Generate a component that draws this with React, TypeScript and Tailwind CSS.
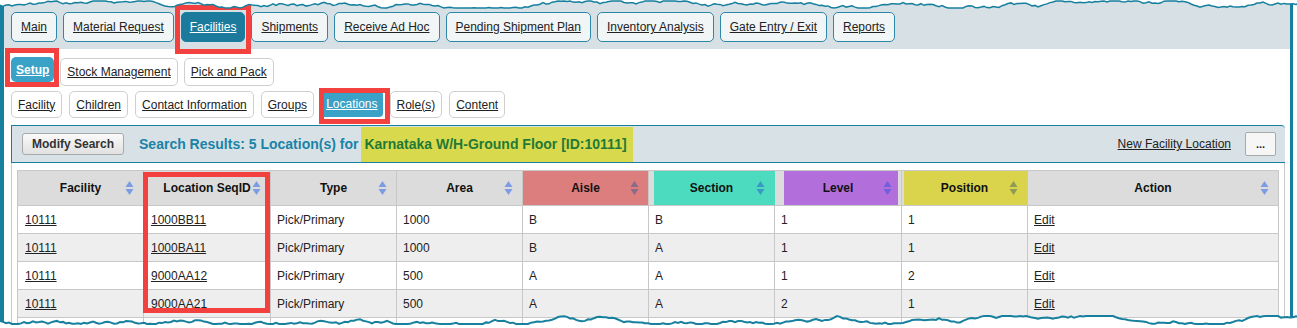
import React from 'react';

const mainTabs = ['Main', 'Material Request', 'Facilities', 'Shipments', 'Receive Ad Hoc', 'Pending Shipment Plan', 'Inventory Analysis', 'Gate Entry / Exit', 'Reports'];
const subTabs = ['Setup', 'Stock Management', 'Pick and Pack'];
const setupTabs = ['Facility', 'Children', 'Contact Information', 'Groups', 'Locations', 'Role(s)', 'Content'];

const rows = [
  { seq: '1000BB11', type: 'Pick/Primary', area: '1000', aisle: 'B', section: 'B', level: '1', position: '1' },
  { seq: '1000BA11', type: 'Pick/Primary', area: '1000', aisle: 'B', section: 'A', level: '1', position: '1' },
  { seq: '9000AA12', type: 'Pick/Primary', area: '500', aisle: 'A', section: 'A', level: '1', position: '2' },
  { seq: '9000AA21', type: 'Pick/Primary', area: '500', aisle: 'A', section: 'A', level: '2', position: '1' },
];

// torn paper edge, random walk
function jagged(seed: number, base: number, min: number, max: number) {
  let s = seed;
  let y = base;
  const pts: [number, number][] = [];
  for (let x = 0; x <= 1300; x += 3) {
    s = (s * 9301 + 49297) % 233280;
    const r = s / 233280;
    y += (r - 0.5) * 3;
    if (r > 0.96) y -= 3;
    if (r < 0.04) y += 3;
    y = Math.max(min, Math.min(max, y));
    pts.push([x, Math.round(y * 10) / 10]);
  }
  return pts;
}

function TornEdges() {
  const top = jagged(17, 4, 1, 8);
  const bottom = jagged(91, 320, 316, 324);
  const line = (p: [number, number][]) => p.map(([x, y]) => `${x},${y}`).join(' ');
  return (
    <svg className="pointer-events-none absolute inset-0" width={1297} height={328}>
      <polygon points={`0,0 ${line(top)} 1300,0`} fill="#fff" />
      <polyline points={line(top)} fill="none" stroke="#17809f" strokeWidth={1.5} />
      <polygon points={`0,328 ${line(bottom)} 1300,328`} fill="#fff" />
      <polyline points={line(bottom)} fill="none" stroke="#17809f" strokeWidth={2} />
    </svg>
  );
}

function RedBox({ className }: { className: string }) {
  return <span className={`pointer-events-none absolute border-[5px] border-[#f2413f] ${className}`} />;
}

function SortIcon({ color = '#7d9ce2' }: { color?: string }) {
  return (
    <svg width="9" height="15" viewBox="0 0 9 15" className="absolute right-[9px] top-1/2 -translate-y-1/2">
      <path d="M4.5 0.5 L8.5 6.5 H0.5 Z" fill={color} />
      <path d="M4.5 14.5 L8.5 8.5 H0.5 Z" fill={color} />
    </svg>
  );
}

function Header({ label, bg, inner, icon }: { label: string; bg?: string; inner?: string; icon?: string }) {
  return (
    <th className="relative h-[35px] border border-[#c8c8c8] bg-[#dcdcdc] p-0 text-[12px] font-bold text-[#111]">
      {bg ? <div className={`absolute inset-y-0 ${inner} ${bg}`} /> : null}
      <span className="relative">{label}</span>
      <SortIcon color={icon} />
    </th>
  );
}

export default function App() {
  return (
    <div className="relative h-[328px] w-[1297px] overflow-hidden bg-white font-['Liberation_Sans',Arial,sans-serif] text-[#222]">
      <div className="mr-[4px] h-full border-l-4 border-r-[3px] border-[#17809f]">
        {/* top navigation */}
        <nav className="flex h-[49px] gap-[6px] bg-[#d6e0e5] pl-[7px] pt-[12px]">
          {mainTabs.map((t) =>
            t === 'Facilities' ? (
              <div key={t} className="relative ml-px">
                <a className="flex h-[30px] items-center rounded-[5px] border border-[#17809f] bg-[#1c7b9d] px-[8px] text-[12px] text-white underline">
                  {t}
                </a>
                <RedBox className="-bottom-[5px] -left-[6px] -right-[6px] -top-[7px]" />
              </div>
            ) : (
              <a key={t} className="flex h-[30px] items-center rounded-[5px] border border-[#2d87a8] bg-[#f1f5f6] px-[9px] text-[12px] underline">
                {t}
              </a>
            )
          )}
        </nav>

        {/* facility sub tabs */}
        <div className="flex h-[37px] items-start gap-[6px] pl-[7px] pt-[8px]">
          {subTabs.map((t) =>
            t === 'Setup' ? (
              <div key={t} className="relative">
                <a className="flex h-[25px] items-center rounded-[5px] bg-[#3aa1c7] px-[5px] text-[12px] font-bold text-white underline">
                  {t}
                </a>
                <RedBox className="-bottom-[5px] -left-[6px] -right-[5px] -top-[9px]" />
              </div>
            ) : (
              <a key={t} className="mt-px flex h-[28px] items-center rounded-[5px] border border-[#cfcfcf] bg-white px-[6px] text-[12px] underline">
                {t}
              </a>
            )
          )}
        </div>

        {/* setup tabs */}
        <div className="flex h-[32px] items-start gap-[7px] pl-[7px] pt-[5px]">
          {setupTabs.map((t) =>
            t === 'Locations' ? (
              <div key={t} className="relative">
                <a className="flex h-[26px] items-center rounded-[4px] bg-[#3aa1c7] px-[5px] text-[12px] text-white underline">
                  {t}
                </a>
                <RedBox className="-bottom-[7px] -left-[2px] -right-[7px] -top-[3px]" />
              </div>
            ) : (
              <a key={t} className="flex h-[27px] items-center rounded-[5px] border border-[#cfcfcf] bg-white px-[6px] text-[12px] underline">
                {t}
              </a>
            )
          )}
        </div>

        {/* search results panel */}
        <div className="ml-[7px] mr-[5px] mt-[7px] flex h-[38px] items-center rounded-tr-[4px] border-y border-l border-[#17809f] bg-[#d7e1e6] pl-[10px] pr-[9px]">
          <button className="h-[22px] rounded-[3px] border border-[#a9a9a9] bg-gradient-to-b from-[#fafafa] to-[#e1e1e1] px-[9px] text-[12px] font-bold text-[#333]">
            Modify Search
          </button>
          <span className="ml-[15px] text-[14px] font-bold text-[#1a83a6]">Search Results: 5 Location(s) for</span>
          <span className="ml-[3px] flex h-[35px] items-center self-end bg-[#d9d94d] pl-[3px] pr-[6px] text-[14px] font-bold text-[#1f7a36]">
            Karnataka W/H-Ground Floor [ID:10111]
          </span>
          <a className="ml-auto text-[12px] underline">New Facility Location</a>
          <button className="ml-[14px] h-[24px] w-[31px] rounded-[2px] border border-[#a9a9a9] bg-[#f6f6f6] text-[11px] font-bold leading-none">
            ...
          </button>
        </div>

        {/* table */}
        <div className="ml-[7px] mr-[5px] border-x border-[#c9c9c9] px-[5px] pt-[7px]">
          <div className="relative">
            <table className="w-[1261px] table-fixed border-collapse">
              <colgroup>
                <col className="w-[126px]" />
                <col className="w-[127px]" />
                <col className="w-[126px]" />
                <col className="w-[126px]" />
                <col className="w-[126px]" />
                <col className="w-[126px]" />
                <col className="w-[127px]" />
                <col className="w-[126px]" />
                <col className="w-[251px]" />
              </colgroup>
              <thead>
                <tr>
                  <Header label="Facility" />
                  <Header label="Location SeqID" />
                  <Header label="Type" />
                  <Header label="Area" />
                  <Header label="Aisle" bg="bg-[#dc7e7e]" inner="left-0 right-0" icon="#8a6a86" />
                  <Header label="Section" bg="bg-[#4cdbbf]" inner="left-[5px] -right-[3px]" icon="#3a99c4" />
                  <Header label="Level" bg="bg-[#b26fdc]" inner="left-[9px] right-[3px]" icon="#7060e0" />
                  <Header label="Position" bg="bg-[#d9d44b]" inner="left-[2px] right-0" icon="#8d9b57" />
                  <Header label="Action" />
                </tr>
              </thead>
              <tbody className="text-[12px]">
                {rows.map((r, i) => (
                  <tr key={r.seq} className={i % 2 ? 'bg-[#eeeeee]' : 'bg-white'}>
                    <td className="h-[28px] border border-[#c8c8c8] pl-[7px]"><a className="underline">10111</a></td>
                    <td className="border border-[#c8c8c8] pl-[7px]"><a className="underline">{r.seq}</a></td>
                    <td className="border border-[#c8c8c8] pl-[6px]">{r.type}</td>
                    <td className="border border-[#c8c8c8] pl-[6px]">{r.area}</td>
                    <td className="border border-[#c8c8c8] pl-[6px]">{r.aisle}</td>
                    <td className="border border-[#c8c8c8] pl-[6px]">{r.section}</td>
                    <td className="border border-[#c8c8c8] pl-[6px]">{r.level}</td>
                    <td className="border border-[#c8c8c8] pl-[6px]">{r.position}</td>
                    <td className="border border-[#c8c8c8] pl-[6px]"><a className="underline">Edit</a></td>
                  </tr>
                ))}
                <tr className="bg-white">
                  {Array.from({ length: 9 }).map((_, i) => (
                    <td key={i} className="h-[28px] border border-[#c8c8c8]" />
                  ))}
                </tr>
              </tbody>
            </table>
            <RedBox className="left-[126px] top-[2px] h-[141px] w-[127px]" />
          </div>
        </div>
      </div>
      <TornEdges />
    </div>
  );
}
